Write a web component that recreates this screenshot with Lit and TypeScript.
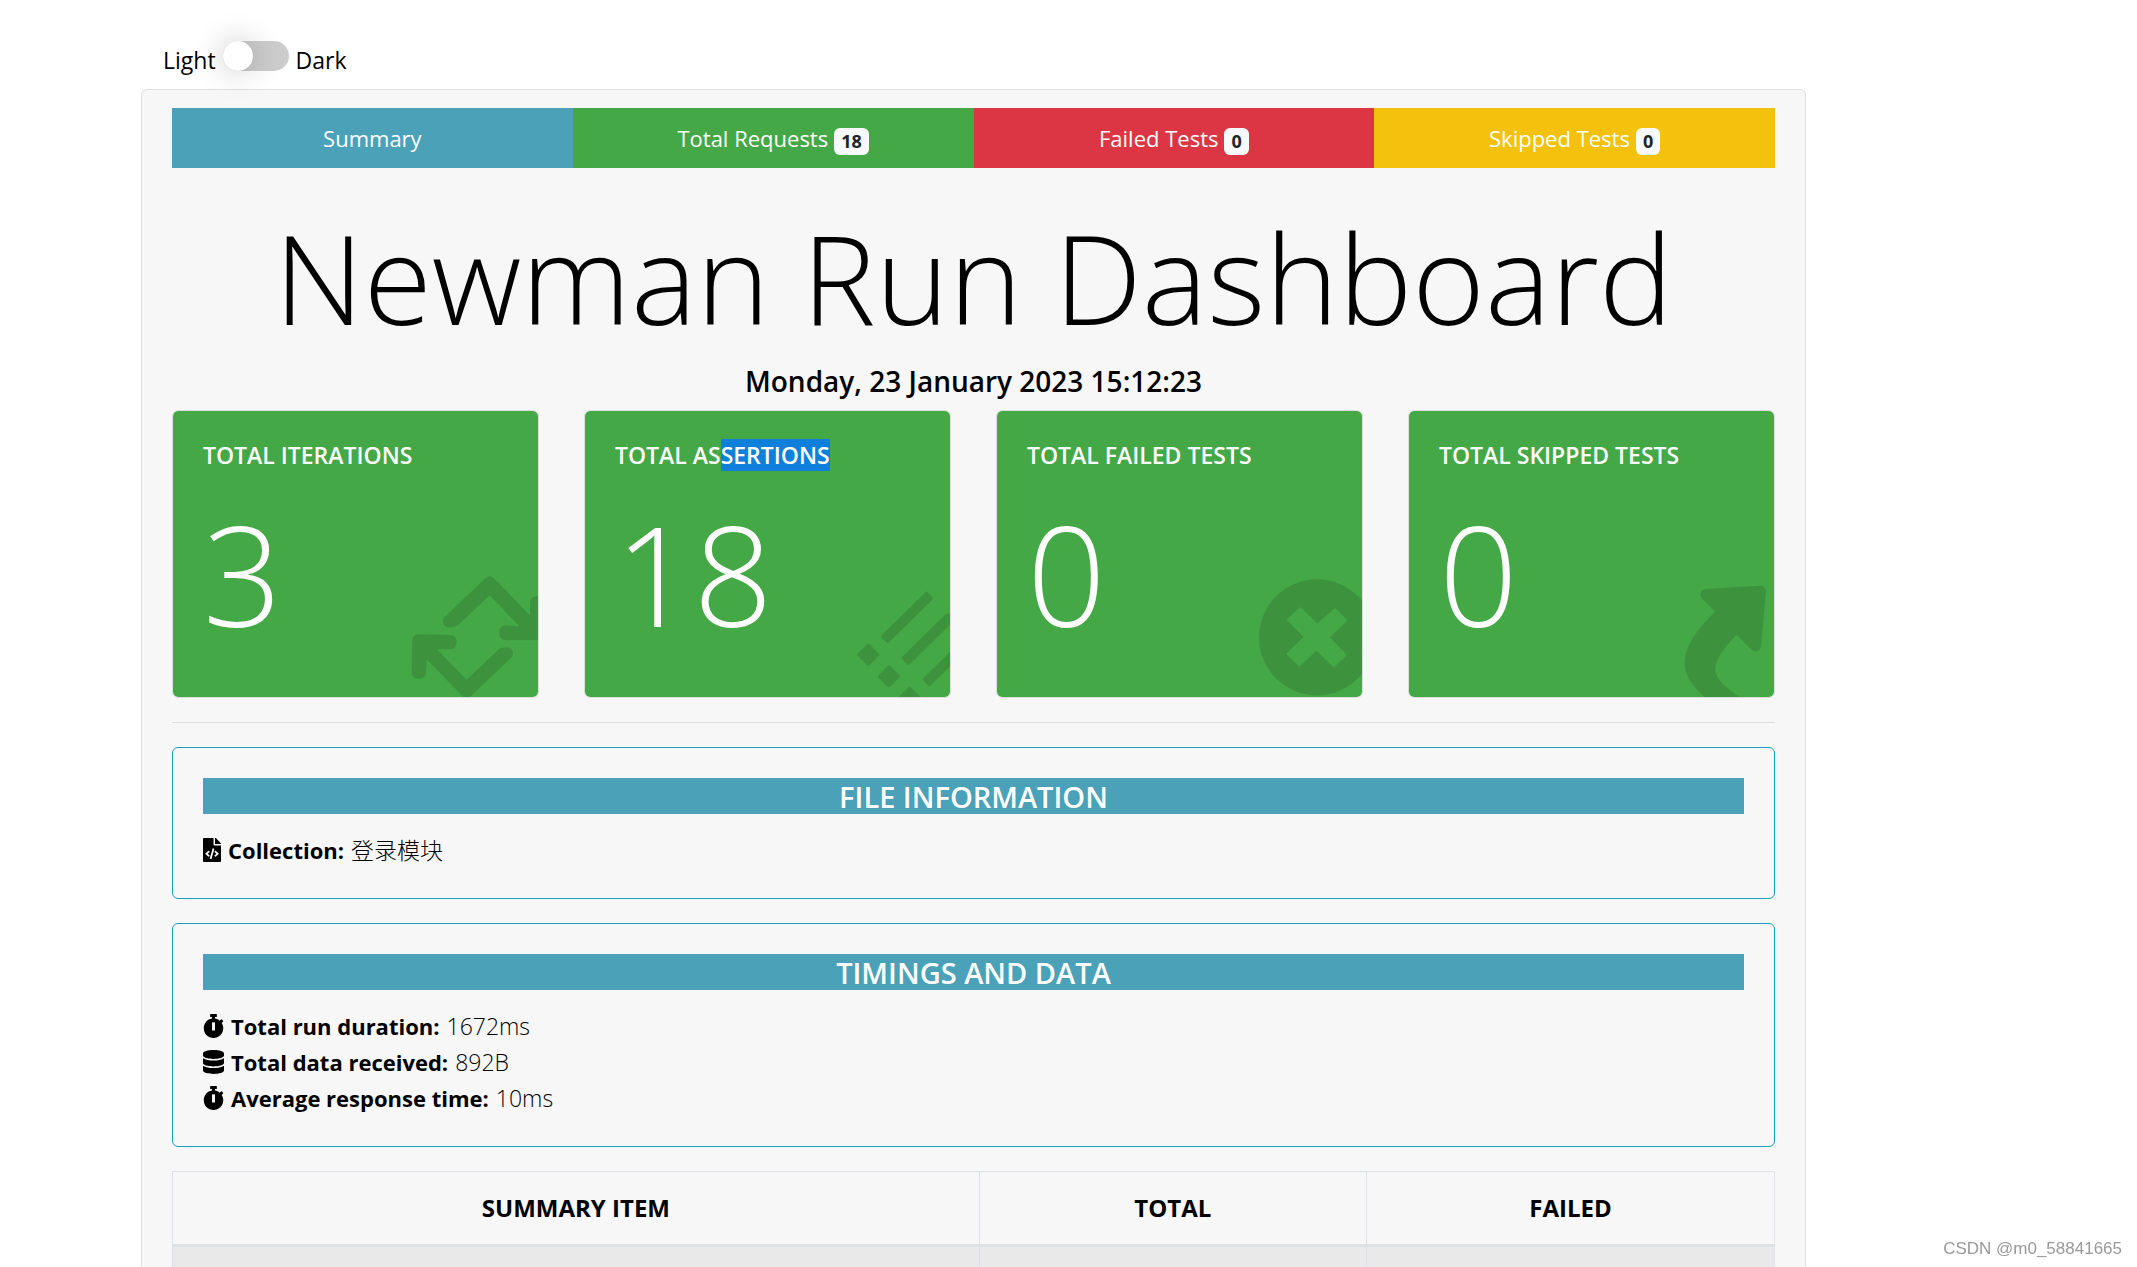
import { LitElement, html, css, svg } from "lit";
import { customElement, property, state } from "lit/decorators.js";

type IconName = "file" | "stopwatch" | "database";
type Mark = "cycle" | "bars" | "cross" | "arrow";

const ICONS: Record<IconName, { width: number; path: string }> = {
  file: {
    width: 384,
    path: "M384 121.941V128H256V0h6.059c6.365 0 12.47 2.529 16.971 7.029l97.941 97.941A24.005 24.005 0 0 1 384 121.941zM248 160c-13.2 0-24-10.8-24-24V0H24C10.745 0 0 10.745 0 24v464c0 13.255 10.745 24 24 24h336c13.255 0 24-10.745 24-24V160H248zM123.206 400.505a5.4 5.4 0 0 1-7.633.246l-64.866-60.812a5.4 5.4 0 0 1 0-7.879l64.866-60.812a5.4 5.4 0 0 1 7.633.246l19.579 20.885a5.4 5.4 0 0 1-.372 7.747L101.65 336l40.763 35.874a5.4 5.4 0 0 1 .372 7.747l-19.579 20.884zm51.295 50.479l-27.453-7.97a5.402 5.402 0 0 1-3.681-6.692l61.44-211.626a5.402 5.402 0 0 1 6.692-3.681l27.452 7.97a5.4 5.4 0 0 1 3.68 6.692l-61.44 211.626a5.397 5.397 0 0 1-6.69 3.681zm160.792-111.045l-64.866 60.812a5.4 5.4 0 0 1-7.633-.246l-19.58-20.885a5.4 5.4 0 0 1 .372-7.747L284.35 336l-40.763-35.874a5.4 5.4 0 0 1-.372-7.747l19.58-20.885a5.4 5.4 0 0 1 7.633-.246l64.866 60.812a5.4 5.4 0 0 1-.001 7.879z",
  },
  stopwatch: {
    width: 448,
    path: "M432 304c0 114.9-93.1 208-208 208S16 418.9 16 304c0-104 76.3-190.2 176-205.5V64h-28c-6.6 0-12-5.4-12-12V12c0-6.6 5.4-12 12-12h120c6.6 0 12 5.4 12 12v40c0 6.6-5.4 12-12 12h-28v34.5c37.5 5.8 71.7 21.6 99.7 44.6l27.5-27.5c4.7-4.7 12.3-4.7 17 0l28.3 28.3c4.7 4.7 4.7 12.3 0 17l-29.4 29.4-.6.6C419.7 223.3 432 262.2 432 304zm-176 36V188.5c0-6.6-5.4-12-12-12h-40c-6.6 0-12 5.4-12 12V340c0 6.6 5.4 12 12 12h40c6.6 0 12-5.4 12-12z",
  },
  database: {
    width: 448,
    path: "M448 73.143v45.714C448 159.143 347.667 192 224 192S0 159.143 0 118.857V73.143C0 32.857 100.333 0 224 0s224 32.857 224 73.143zM448 176v102.857C448 319.143 347.667 352 224 352S0 319.143 0 278.857V176c48.125 33.143 136.208 48.572 224 48.572S399.874 209.143 448 176zm0 160v102.857C448 479.143 347.667 512 224 512S0 479.143 0 438.857V336c48.125 33.143 136.208 48.572 224 48.572S399.874 369.143 448 336z",
  },
};

const MARKS = {
  cycle: {
    box: "744 512 390 378",
    shape: svg`<path d="M854 650L977 533Q989 522 1001 533L1110 645V608Q1110 588 1130 588H1134V720H1038Q1018 720 1018 698Q1018 675 1038 675L1078 678L989 585L897 672Q887 681 870 681Q849 681 849 663Q849 655 854 650Z"/><path d="M757 722Q757 702 777 702L870 704Q890 705 890 726Q890 747 870 747H830L920 838L1014 749Q1022 741 1040 741Q1059 741 1059 759Q1059 767 1053 773L932 888Q920 898 908 888L800 777L798 816Q797 836 776 836Q755 836 755 816Z"/>`,
  },
  bars: {
    box: "750 512 390 378",
    shape: svg`<g class="soft"><path d="M1070 579L1084 594L953 723L938 708Z"/><path d="M1132 644L1147 659L1016 788L1000 773Z"/><path d="M1195 708L1210 724L1078 852L1063 837Z"/><path d="M895 735L923 763L895 791L867 763Z"/><path d="M957 800L985 828L957 856L929 828Z"/><path d="M1019 864L1047 892L1019 920L991 892Z"/></g>`,
  },
  cross: {
    box: "756 512 390 378",
    shape: svg`<circle cx="1011" cy="711" r="174"/><path class="cut" d="M961 625L1012 675L1065 628L1097 660L1045 711L1095 764L1061 796L1009 745L958 794L924 761L976 710L925 658Z"/>`,
  },
  arrow: {
    box: "762 512 390 378",
    shape: svg`<path d="M947 566L1111 556Q1128 556 1128 573L1113 738Q1111 753 1096 753Q1089 753 1083 747L1040 703Q976 767 976 806Q976 846 1050 890H945Q884 840 884 787Q884 722 975 634L936 594Q930 587 931 580Q934 567 947 566Z"/>`,
  },
};

@customElement("stat-card")
class StatCard extends LitElement {
  @property() label = "";
  @property() selected = "";
  @property() value = "";
  @property() mark: Mark = "cycle";

  static styles = css`
    :host {
      display: block;
      position: relative;
      overflow: hidden;
      box-sizing: border-box;
      height: 288px;
      padding: 24px 30px;
      border: 1px solid #d9dfd9;
      border-radius: 6px;
      background: #44a846;
      background-clip: padding-box;
      color: #fff;
    }
    .label {
      margin: 0;
      font-size: 23px;
      font-weight: 600;
      line-height: 40px;
    }
    .selected {
      background: #0f7fdc;
    }
    .value {
      margin: 12px 0 0;
      font-size: 138px;
      font-weight: 300;
      line-height: 172px;
    }
    .mark {
      position: absolute;
      right: 0;
      bottom: 0;
      width: 130px;
      height: 126px;
      fill: #3d923e;
    }
    .soft {
      stroke: #3d923e;
      stroke-width: 10px;
      stroke-linejoin: round;
    }
    .cut {
      fill: #44a846;
      stroke: #44a846;
      stroke-width: 8px;
      stroke-linejoin: round;
    }
  `;

  render() {
    const mark = MARKS[this.mark];
    return html`
      <svg class="mark" viewBox=${mark.box} aria-hidden="true">${mark.shape}</svg>
      <h5 class="label">${this.label}${this.selected ? html`<span class="selected">${this.selected}</span>` : ""}</h5>
      <p class="value">${this.value}</p>
    `;
  }
}

@customElement("info-panel")
class InfoPanel extends LitElement {
  @property() heading = "";
  @property({ attribute: false }) rows: { icon: IconName; label: string; value: string }[] = [];

  static styles = css`
    :host {
      display: block;
      padding: 30px;
      border: 1px solid #17a2b8;
      border-radius: 6px;
    }
    .heading {
      height: 36px;
      margin: 0 0 18px;
      background: #4aa1b8;
      color: #fff;
      font-size: 29px;
      font-weight: 600;
      line-height: 38px;
      text-align: center;
    }
    .row {
      display: flex;
      align-items: center;
      gap: 7px;
      font-size: 23px;
      font-weight: 300;
      line-height: 36px;
    }
    .row strong {
      font-size: 22px;
      font-weight: 700;
    }
    .icon {
      height: 24px;
      fill: #000;
    }
  `;

  render() {
    return html`
      <h5 class="heading">${this.heading}</h5>
      ${this.rows.map(
        (row) => html`<div class="row">
          <svg class="icon" viewBox="0 0 ${ICONS[row.icon].width} 512" aria-hidden="true"><path d=${ICONS[row.icon].path} /></svg>
          <strong>${row.label}</strong><span>${row.value}</span>
        </div>`
      )}
    `;
  }
}

@customElement("app-root")
class AppRoot extends LitElement {
  @state() private dark = false;

  static styles = css`
    :host {
      display: grid;
      grid-template-columns: 141fr 1665fr 331fr;
      height: 100vh;
      overflow: hidden;
      background: #fff;
      color: #000;
      font-family: "Open Sans", "Noto Sans", "Noto Sans CJK SC", sans-serif;
      font-size: 22px;
      line-height: 36px;
    }
    .page {
      grid-column: 2;
      min-width: 0;
    }
    .theme {
      display: flex;
      gap: 7px;
      height: 48px;
      padding: 41px 22px 0;
      font-size: 23px;
      line-height: 38px;
    }
    .switch {
      appearance: none;
      width: 66px;
      height: 30px;
      margin: 0;
      border-radius: 15px;
      background: #ccc;
    }
    .switch::before {
      content: "";
      display: block;
      width: 30px;
      height: 30px;
      border-radius: 50%;
      background: #fff;
      box-shadow: 0 0 30px rgba(0, 0, 0, 0.25);
    }
    .switch:checked::before {
      margin-left: auto;
    }
    .card {
      box-sizing: border-box;
      min-height: 100vh;
      padding: 18px 30px;
      border: 1px solid #dfdfdf;
      border-radius: 6px;
      background: #f7f7f7;
    }
    .tabs {
      display: grid;
      grid-template-columns: repeat(4, 1fr);
    }
    .tab {
      display: flex;
      align-items: center;
      justify-content: center;
      gap: 6px;
      height: 60px;
      color: #fff;
      text-decoration: none;
    }
    .info {
      background: #4aa1b8;
    }
    .success {
      background: #44a846;
    }
    .danger {
      background: #dc3645;
    }
    .warning {
      background: #f4c20d;
    }
    .badge {
      margin-top: 6px;
      padding: 0 7px;
      border-radius: 6px;
      background: #f8f9fa;
      color: #212529;
      font-size: 18px;
      font-weight: 700;
      line-height: 27px;
    }
    .title {
      margin: 30px 0 0;
      font-size: 124px;
      font-weight: 300;
      line-height: 158px;
      text-align: center;
      white-space: nowrap;
    }
    .date {
      margin: 4px 0 8px;
      font-size: 28px;
      font-weight: 600;
      line-height: 42px;
      text-align: center;
    }
    .stats {
      display: grid;
      grid-template-columns: repeat(4, 1fr);
      gap: 45px;
    }
    .rule {
      margin: 24px 0;
      border: 0;
      border-top: 1px solid #dfdfdf;
    }
    .panels {
      display: grid;
      gap: 24px;
    }
    .summary {
      width: 100%;
      border-collapse: collapse;
      table-layout: fixed;
    }
    .summary th,
    .summary td {
      border: 1px solid #dee2e6;
    }
    .summary th {
      height: 72px;
      padding: 0;
      border-bottom-width: 3px;
      font-size: 24px;
      font-weight: 700;
    }
    .summary td {
      height: 60px;
      background: #e9e9e9;
    }
    .item {
      width: 50.3%;
    }
    .total {
      width: 24.1%;
    }
    .watermark {
      position: fixed;
      right: 15px;
      bottom: 6px;
      color: #999;
      font-family: "Liberation Sans", sans-serif;
      font-size: 17px;
      line-height: 24px;
    }
  `;

  render() {
    return html`
      <div class="page">
        <div class="theme">
          <label for="theme">Light</label>
          <input
            class="switch"
            id="theme"
            type="checkbox"
            aria-label="Dark theme"
            .checked=${this.dark}
            @change=${(e: Event) => (this.dark = (e.target as HTMLInputElement).checked)}
          />
          <label for="theme">Dark</label>
        </div>
        <main class="card">
          <nav class="tabs">
            <a class="tab info" href="#summary">Summary</a>
            <a class="tab success" href="#requests">Total Requests <span class="badge">18</span></a>
            <a class="tab danger" href="#failed">Failed Tests <span class="badge">0</span></a>
            <a class="tab warning" href="#skipped">Skipped Tests <span class="badge">0</span></a>
          </nav>
          <h1 class="title">Newman Run Dashboard</h1>
          <h5 class="date">Monday, 23 January 2023 15:12:23</h5>
          <section class="stats">
            <stat-card label="TOTAL ITERATIONS" value="3" mark="cycle"></stat-card>
            <stat-card label="TOTAL AS" selected="SERTIONS" value="18" mark="bars"></stat-card>
            <stat-card label="TOTAL FAILED TESTS" value="0" mark="cross"></stat-card>
            <stat-card label="TOTAL SKIPPED TESTS" value="0" mark="arrow"></stat-card>
          </section>
          <hr class="rule" />
          <section class="panels">
            <info-panel heading="FILE INFORMATION" .rows=${[{ icon: "file", label: "Collection:", value: "登录模块" }]}></info-panel>
            <info-panel
              heading="TIMINGS AND DATA"
              .rows=${[
                { icon: "stopwatch", label: "Total run duration:", value: "1672ms" },
                { icon: "database", label: "Total data received:", value: "892B" },
                { icon: "stopwatch", label: "Average response time:", value: "10ms" },
              ]}
            ></info-panel>
            <table class="summary">
              <thead>
                <tr>
                  <th class="item" scope="col">SUMMARY ITEM</th>
                  <th class="total" scope="col">TOTAL</th>
                  <th scope="col">FAILED</th>
                </tr>
              </thead>
              <tbody>
                <tr>
                  <td></td>
                  <td></td>
                  <td></td>
                </tr>
              </tbody>
            </table>
          </section>
        </main>
      </div>
      <div class="watermark">CSDN @m0_58841665</div>
    `;
  }
}
